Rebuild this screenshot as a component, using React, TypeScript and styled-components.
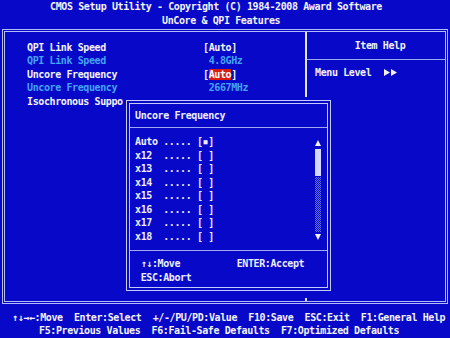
import styled, { createGlobalStyle } from "styled-components";

const BLUE = "#0808c8";
const LINE = "#b4bcf8";
const WHITE = "#f2f2f6";
const CYAN = "#44a4f4";

const GlobalStyle = createGlobalStyle`
  * { box-sizing: border-box; }
  body { margin: 0; background: ${BLUE}; }
`;

const settings = [
  { label: "QPI Link Speed", value: "[Auto]", tone: "edit" },
  { label: "QPI Link Speed", value: " 4.8GHz", tone: "info" },
  { label: "Uncore Frequency", value: "[Auto]", tone: "edit", active: true },
  { label: "Uncore Frequency", value: " 2667MHz", tone: "info" },
  { label: "Isochronous Support", value: "", tone: "edit" },
];

const options = [
  { name: "Auto", picked: true },
  { name: "x12" },
  { name: "x13" },
  { name: "x14" },
  { name: "x15" },
  { name: "x16" },
  { name: "x17" },
  { name: "x18" },
];

export default function App() {
  return (
    <>
      <GlobalStyle />
      <Screen>
        <Header>
          <Line $indent={50}>CMOS Setup Utility - Copyright (C) 1984-2008 Award Software</Line>
          <Line $indent={162}>UnCore &amp; QPI Features</Line>
        </Header>

        <Frame>
          <SettingsPanel>
            {settings.map((s, i) => (
              <SettingRow key={i} $tone={s.tone}>
                <span>{s.label}</span>
                <span>
                  {s.active ? (
                    <>
                      [<Highlight>Auto</Highlight>]
                    </>
                  ) : (
                    s.value
                  )}
                </span>
              </SettingRow>
            ))}
          </SettingsPanel>

          <HelpPanel>
            <HelpTitle>Item Help</HelpTitle>
            <HelpBody>
              <span>Menu Level</span>
              {/* submenu marker: two small right triangles */}
              <svg width="14" height="7" viewBox="0 0 14 7">
                <path d="M0 0 L6 3.5 L0 7 Z M7 0 L13 3.5 L7 7 Z" fill={WHITE} />
              </svg>
            </HelpBody>
          </HelpPanel>
        </Frame>

        <Footer>
          <Line $indent={12}>↑↓→←:Move  Enter:Select  +/-/PU/PD:Value  F10:Save  ESC:Exit  F1:General Help</Line>
          <Line $indent={39}>F5:Previous Values  F6:Fail-Safe Defaults  F7:Optimized Defaults</Line>
        </Footer>

        <Popup>
          <PopupTitle>Uncore Frequency</PopupTitle>
          <ListArea>
            <Options>
              {options.map((o) => (
                <div key={o.name}>
                  {o.name.padEnd(5, " ")}..... [{o.picked ? "▪" : " "}]
                </div>
              ))}
            </Options>
            <Scrollbar>
              <svg width="6" height="9" viewBox="0 0 6 9">
                <path d="M3 2 L6 8 L0 8 Z" fill={WHITE} />
              </svg>
              <Thumb />
              <Track />
              <svg width="6" height="9" viewBox="0 0 6 9">
                <path d="M0 1 L6 1 L3 7 Z" fill={WHITE} />
              </svg>
            </Scrollbar>
          </ListArea>
          <KeyHelp>
            <span>↑↓:Move</span>
            <span>ENTER:Accept</span>
            <span>ESC:Abort</span>
          </KeyHelp>
        </Popup>
      </Screen>
    </>
  );
}

const Screen = styled.div`
  position: relative;
  width: 450px;
  height: 338px;
  overflow: hidden;
  display: flex;
  flex-direction: column;
  background: ${BLUE};
  color: ${WHITE};
  font-family: "DejaVu Sans Mono", "Liberation Mono", monospace;
  font-weight: bold;
  font-size: 10px;
  letter-spacing: -0.395px;
  line-height: 13.5px;
  white-space: pre;
`;

const Header = styled.div`
  height: 29px;
`;

const Line = styled.div<{ $indent: number }>`
  height: 13.5px;
  padding-left: ${(p) => p.$indent}px;
`;

const Frame = styled.div`
  height: 275px;
  margin: 0 2px;
  border: 3px double ${LINE};
  display: grid;
  grid-template-columns: 300px 1fr;
`;

const SettingsPanel = styled.div`
  padding: 8.5px 0 0 22px;
`;

const SettingRow = styled.div<{ $tone: string }>`
  display: grid;
  grid-template-columns: 176px auto;
  height: 13.5px;
  color: ${(p) => (p.$tone === "info" ? CYAN : WHITE)};
`;

const Highlight = styled.span`
  background: #d81c10;
  color: #fff;
`;

const HelpPanel = styled.div`
  border-left: 2px solid #e0e4ff;
  display: flex;
  flex-direction: column;
`;

const HelpTitle = styled.div`
  height: 28px;
  display: flex;
  align-items: center;
  justify-content: center;
  padding-left: 8px;
  border-bottom: 1px solid #a0a8f0;
`;

const HelpBody = styled.div`
  display: flex;
  align-items: center;
  gap: 13px;
  height: 13.5px;
  margin-top: 6px;
  padding-left: 8px;
`;

const Footer = styled.div`
  margin-top: 6.5px;
`;

const Popup = styled.div`
  position: absolute;
  left: 126px;
  top: 100px;
  width: 205px;
  height: 191px;
  border: 4px double #c4ccff;
  box-shadow: 0 0 0 3px ${BLUE}, 0 4px 0 3px ${BLUE};
  background: ${BLUE};
  display: flex;
  flex-direction: column;
  color: #eceeff;
`;

const PopupTitle = styled.div`
  height: 24px;
  display: flex;
  align-items: center;
  padding-left: 5px;
  border-bottom: 1px solid #a0a8f0;
`;

const ListArea = styled.div`
  height: 123px;
  display: flex;
  padding: 7px 0 0 5px;
  border-bottom: 1px solid #a0a8f0;
`;

const Options = styled.div`
  flex: 1;
  & > div {
    height: 13.5px;
  }
`;

const Scrollbar = styled.div`
  width: 6px;
  margin: 3px 6px 0 0;
  display: flex;
  flex-direction: column;
  gap: 1px;
`;

const Thumb = styled.div`
  height: 27px;
  margin-top: 1px;
  background: #d4d8ff;
`;

const Track = styled.div`
  height: 55px;
  background: repeating-conic-gradient(#6878f0 0 25%, ${BLUE} 0 50%) 0 0 / 2px 2px;
`;

const KeyHelp = styled.div`
  flex: 1;
  display: grid;
  grid-template-columns: 96px auto;
  grid-auto-rows: 13.5px;
  align-content: start;
  padding: 6px 0 0 10.7px;
`;
